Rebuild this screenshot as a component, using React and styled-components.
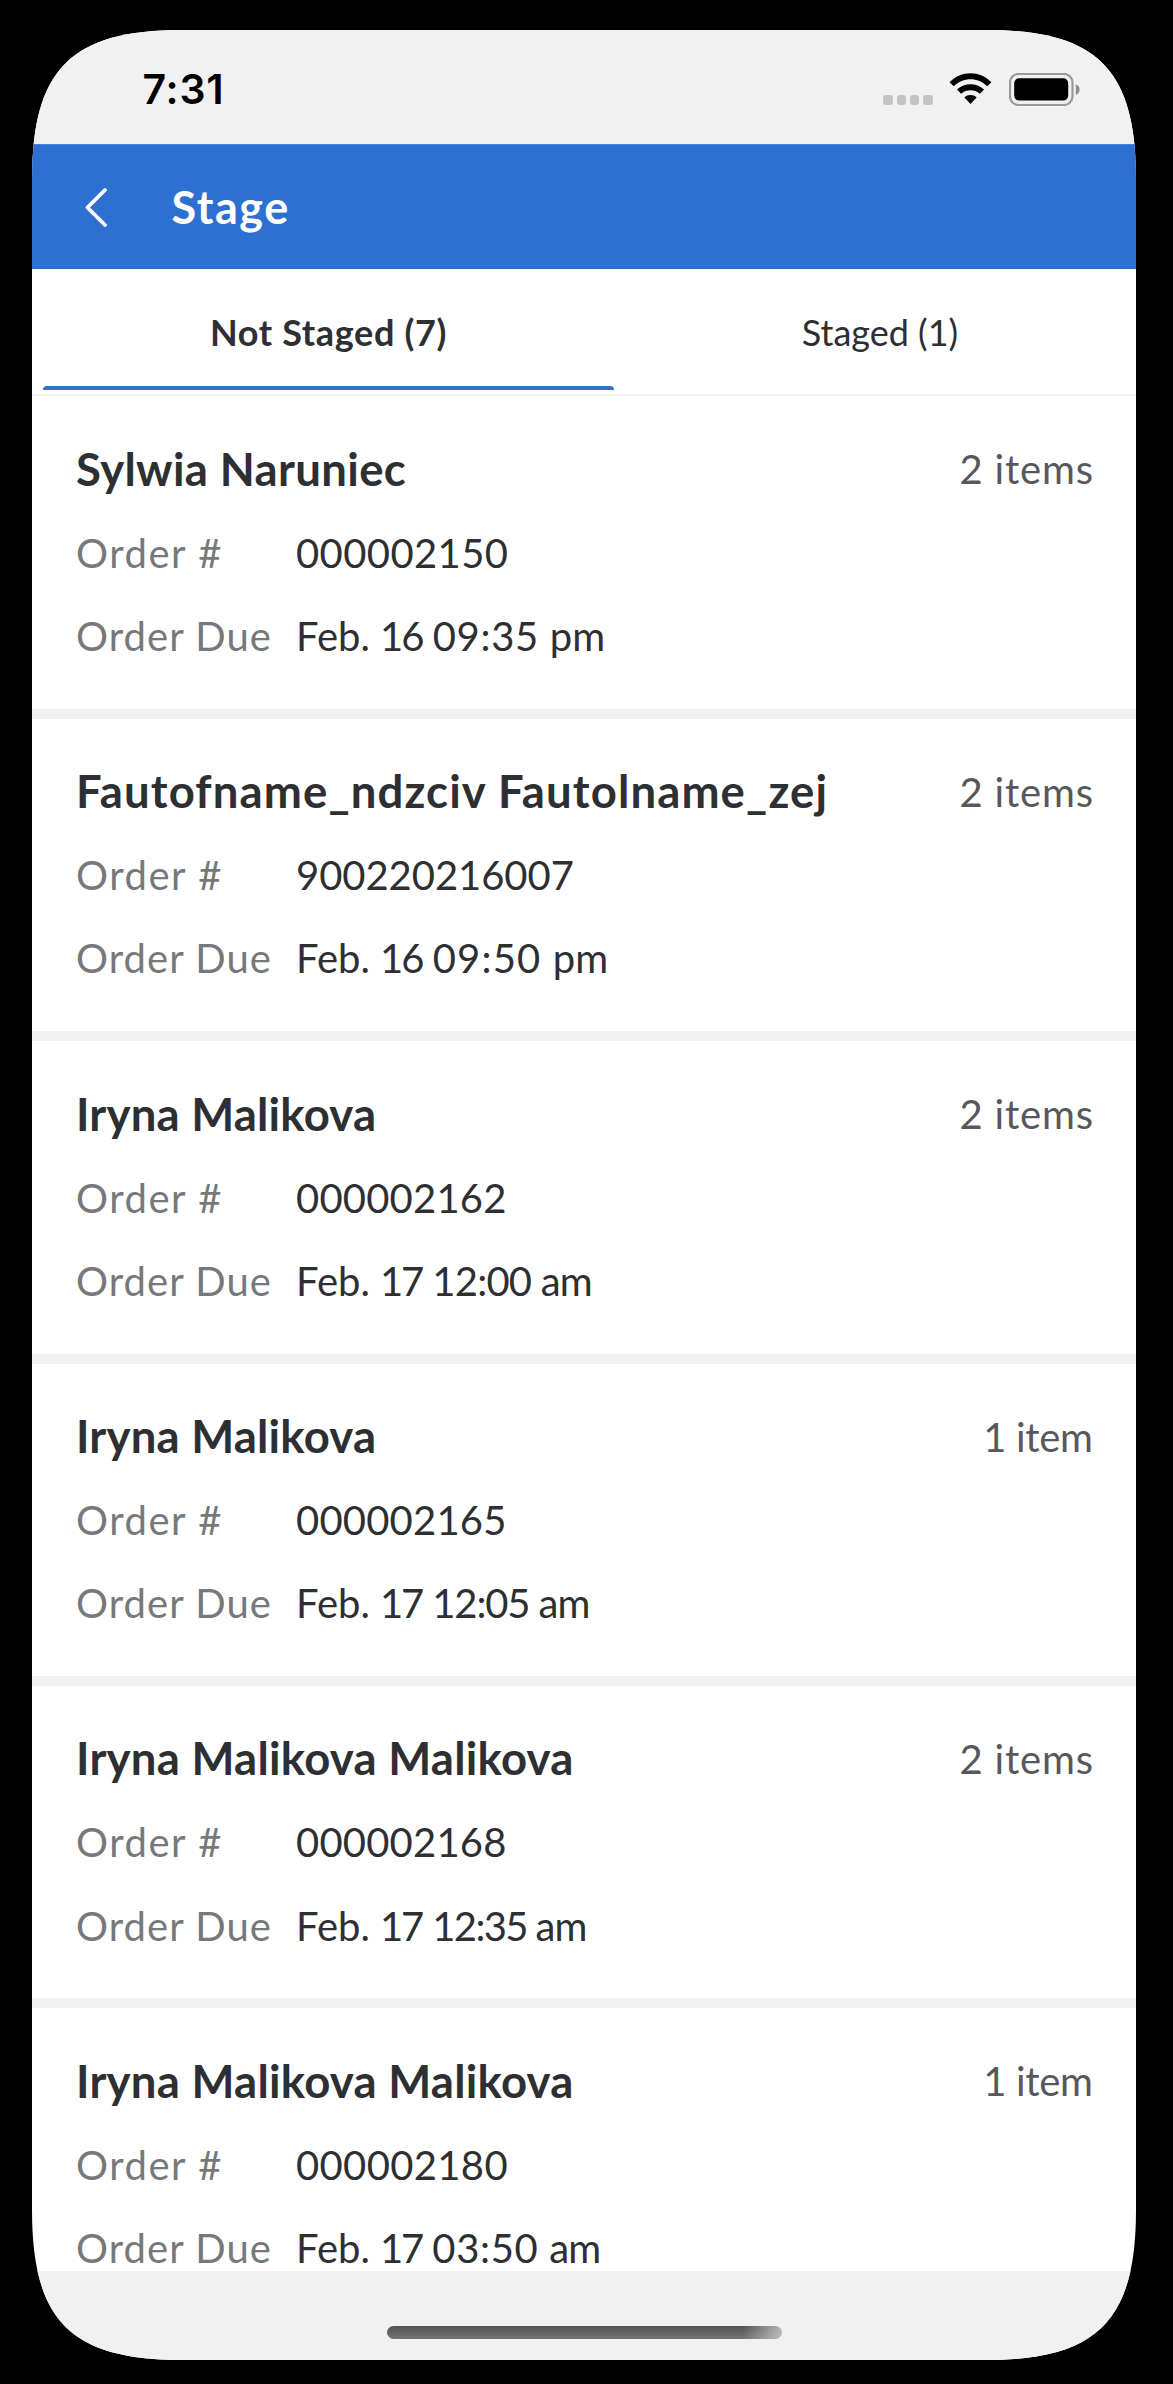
import React from 'react';
import styled, { createGlobalStyle } from 'styled-components';

const Global = createGlobalStyle`
  * { box-sizing: border-box; }
  body { margin: 0; background: #000; font-family: Lato, "Open Sans", sans-serif; font-kerning: normal; }
`;

const Backdrop = styled.div`
  width: 1173px; height: 2384px; padding: 30px 37px 24px 32px; background: #000; overflow: hidden;
`;

const Phone = styled.div`
  display: flex; flex-direction: column; width: 1104px; height: 2330px;
  background: #fff; overflow: hidden;
  clip-path: path("M954 0C1065 0 1104 39 1104 150V2180C1104 2291 1065 2330 954 2330H150C39 2330 0 2291 0 2180V150C0 39 39 0 150 0Z");
`;

const StatusBar = styled.div`
  flex: none; height: 114px; padding: 4px 56px 0 110.5px; background: #f1f1f1;
  display: flex; align-items: center; justify-content: space-between;
`;

const Clock = styled.div`
  font: 600 41px/50px Inter, sans-serif; color: #000; letter-spacing: 0.8px;
`;

const StatusIcons = styled.div`
  display: flex; align-items: flex-end; height: 33px;
`;

const SignalDots = styled.div`
  display: flex; gap: 4px; margin: 0 16.5px 1px 0;
`;

const Dot = styled.i`
  width: 9.3px; height: 9.3px; border-radius: 3px; background: #c3c3c3;
`;

const Wifi = styled.svg`
  width: 43px; height: 32px; margin: 0 17px 1px 0;
`;

const Battery = styled.svg`
  width: 71px; height: 33px;
`;

const Header = styled.header`
  flex: none; height: 125px; padding: 0 0 0 53px; background: #2e6fd2; color: #fff;
  display: flex; align-items: center; border-top: 1px solid #3f86dc;
`;

const BackIcon = styled.svg`
  width: 22px; height: 40px; margin-right: 64.5px;
`;

const Title = styled.h1`
  margin: 0; font-size: 45px; line-height: 56px; font-weight: 700; letter-spacing: 1.5px;
`;

const Tabs = styled.nav`
  flex: none; height: 127.4px; padding: 0 0 4.5px 11px; display: flex;
  border-bottom: 2.4px solid #f0f0f0; margin-right: -10px;
`;

const Tab = styled.div`
  flex: none; width: ${p => p.$width}px; padding-top: 9px; display: flex; flex-direction: column;
  font-size: 36px; color: #2e2f32; text-align: center;
  font-weight: ${p => (p.$active ? 700 : 400)}; letter-spacing: ${p => (p.$active ? 0.65 : 0)}px;
`;

const TabLabel = styled.span`
  flex: 1; display: flex; align-items: center; justify-content: center; white-space: pre;
`;

const Indicator = styled.span`
  height: 4px; border-radius: 4px 4px 0 0; background: ${p => (p.$active ? '#3571c0' : 'transparent')};
`;

const List = styled.main`
  flex: none; height: 1875px; overflow: hidden;
`;

const Card = styled.article`
  height: 322.4px; padding: 30.2px 43px 0 44px; border-bottom: 10px solid #f1f1f1;
`;

const Row = styled.div`
  display: flex; align-items: center; height: 83.3px; white-space: nowrap; font-size: 40px;
`;

const Name = styled.h2`
  flex: 1; margin: 0; font-size: 45.5px; font-weight: 700; color: #2e2f32; letter-spacing: ${p => p.$track}px;
`;

const Count = styled.span`
  padding-top: 2.4px; color: #57585b; letter-spacing: ${p => p.$track}px; margin-right: ${p => -p.$track}px;
`;

const Label = styled.span`
  width: 220px; padding-top: 2.4px; color: #77787a; letter-spacing: ${p => p.$track}px;
`;

const Value = styled.span`
  padding-top: 2.4px; color: #2e2f32; white-space: pre; letter-spacing: ${p => p.$track || 0}px;
`;

const Word = styled.span`
  letter-spacing: ${p => p.$track}px;
`;

const Footer = styled.footer`
  flex: 1; padding-top: 55px; background: #f1f1f1;
`;

const HomeIndicator = styled.div`
  width: 395px; height: 13px; margin-left: 355px; border-radius: 7px;
  background: linear-gradient(100deg, transparent 90%, #bcbcbc 100%), linear-gradient(#515352, #747474);
`;

const orders = [
  { name: 'Sylwia Naruniec', nameTrack: 0.34, items: 2, number: '000002150', numberTrack: 0.4, due: ['16', '09:35', 'pm'], dueTrack: [-2, 0.67, 0] },
  { name: 'Fautofname_ndzciv Fautolname_zej', nameTrack: 1.12, items: 2, number: '900220216007', numberTrack: -0.05, due: ['16', '09:50', 'pm'], dueTrack: [-2, 1.17, 0] },
  { name: 'Iryna Malikova', nameTrack: 0.2, items: 2, number: '000002162', numberTrack: 0.2, due: ['17', '12:00', 'am'], dueTrack: [-2.2, -0.77, -0.8] },
  { name: 'Iryna Malikova', nameTrack: 0.2, items: 1, number: '000002165', numberTrack: 0.2, due: ['17', '12:05', 'am'], dueTrack: [-2.2, -1.17, -0.8] },
  { name: 'Iryna Malikova Malikova', nameTrack: 0.25, items: 2, number: '000002168', numberTrack: 0.2, due: ['17', '12:35', 'am'], dueTrack: [-2.2, -1.67, -0.8] },
  { name: 'Iryna Malikova Malikova', nameTrack: 0.25, items: 1, number: '000002180', numberTrack: 0.35, due: ['17', '03:50', 'am'], dueTrack: [-2.2, 0.63, -0.8] },
];

function OrderCard({ order }) {
  const [day, time, half] = order.due;
  const [dayTrack, timeTrack, halfTrack] = order.dueTrack;
  return (
    <Card>
      <Row>
        <Name $track={order.nameTrack}>{order.name}</Name>
        <Count $track={order.items === 1 ? -0.3 : 0.8}>{order.items === 1 ? '1 item' : `${order.items} items`}</Count>
      </Row>
      <Row>
        <Label $track={1.55}>Order #</Label>
        <Value $track={order.numberTrack}>{order.number}</Value>
      </Row>
      <Row>
        <Label $track={1.07}>Order Due</Label>
        <Value>
          {'Feb. '}
          <Word $track={dayTrack}>{day}</Word>
          {' '}
          <Word $track={timeTrack}>{`${time} `}</Word>
          <Word $track={halfTrack}>{half}</Word>
        </Value>
      </Row>
    </Card>
  );
}

export default function App() {
  return (
    <Backdrop>
      <Global />
      <Phone>
        <StatusBar>
          <Clock>7:31</Clock>
          <StatusIcons>
            <SignalDots><Dot /><Dot /><Dot /><Dot /></SignalDots>
            <Wifi viewBox="0 0 43 32">
              <path d="M0.6 9.2C12-2.8 31-2.8 42.4 9.2L38.3 13.3C29 3.8 14 3.8 4.7 13.3Z" />
              <path d="M8 16.6C15.5 9.4 27.5 9.4 35 16.6L30.9 20.8C25.8 16.2 17.2 16.2 12.1 20.8Z" />
              <path d="M15.4 24.4C18.7 21.3 24.3 21.3 27.6 24.4L21.5 31Z" />
            </Wifi>
            <Battery viewBox="0 0 71 33">
              <rect x="1" y="1" width="62.5" height="31" rx="8.5" fill="none" stroke="#999" strokeWidth="2.2" />
              <rect x="5.2" y="5.2" width="54" height="22.4" rx="5" />
              <path d="M66.8 11.3C69.4 12.4 70.6 14 70.6 16.5S69.4 20.8 66.8 22Z" fill="#8d8d8d" />
            </Battery>
          </StatusIcons>
        </StatusBar>
        <Header>
          <BackIcon viewBox="0 0 22 40" fill="none" stroke="#fff" strokeWidth="3.8" strokeLinecap="round" strokeLinejoin="round">
            <path d="M20 3L2.4 20.5L20 38" />
          </BackIcon>
          <Title>Stage</Title>
        </Header>
        <Tabs>
          <Tab $active $width={571}><TabLabel>Not Staged (7)</TabLabel><Indicator $active /></Tab>
          <Tab $width={532}><TabLabel>Staged (1)</TabLabel><Indicator /></Tab>
        </Tabs>
        <List>
          {orders.map(order => <OrderCard key={order.number} order={order} />)}
        </List>
        <Footer><HomeIndicator /></Footer>
      </Phone>
    </Backdrop>
  );
}
